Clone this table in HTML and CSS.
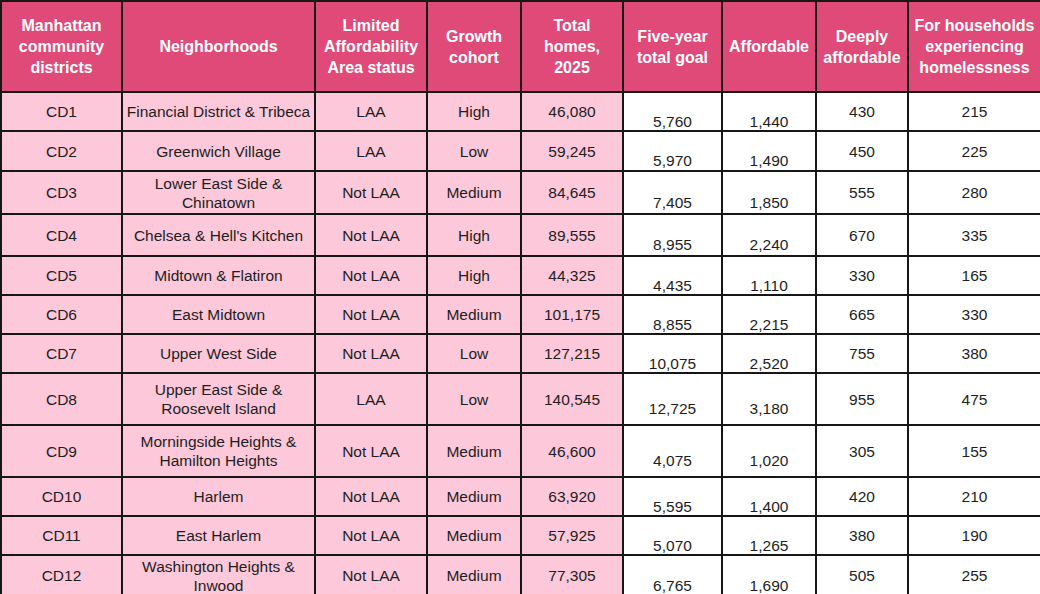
FILE: index.html
```html
<!DOCTYPE html>
<html lang="en">
<head>
<meta charset="utf-8">
<title>Manhattan community districts</title>
<link rel="stylesheet" href="styles.css">
</head>
<body>
<table class="grid">
  <colgroup>
    <col class="c-cd"><col class="c-nb"><col class="c-laa"><col class="c-gc"><col class="c-th">
    <col class="c-five"><col class="c-aff"><col class="c-deep"><col class="c-home">
  </colgroup>
  <thead>
    <tr class="head">
      <th>Manhattan<br>community<br>districts</th>
      <th>Neighborhoods</th>
      <th>Limited<br>Affordability<br>Area status</th>
      <th>Growth<br>cohort</th>
      <th>Total<br>homes,<br>2025</th>
      <th>Five-year<br>total goal</th>
      <th>Affordable</th>
      <th>Deeply<br>affordable</th>
      <th>For households<br>experiencing<br>homelessness</th>
    </tr>
  </thead>
  <tbody>
    <tr class="r39"><td class="pk">CD1</td><td class="pk">Financial District &amp; Tribeca</td><td class="pk">LAA</td><td class="pk">High</td><td class="pk">46,080</td><td class="low">5,760</td><td class="low">1,440</td><td>430</td><td>215</td></tr>
    <tr class="r40"><td class="pk">CD2</td><td class="pk">Greenwich Village</td><td class="pk">LAA</td><td class="pk">Low</td><td class="pk">59,245</td><td class="low">5,970</td><td class="low">1,490</td><td>450</td><td>225</td></tr>
    <tr class="r43"><td class="pk">CD3</td><td class="pk">Lower East Side &amp;<br>Chinatown</td><td class="pk">Not LAA</td><td class="pk">Medium</td><td class="pk">84,645</td><td class="low">7,405</td><td class="low">1,850</td><td>555</td><td>280</td></tr>
    <tr class="r42"><td class="pk">CD4</td><td class="pk">Chelsea &amp; Hell's Kitchen</td><td class="pk">Not LAA</td><td class="pk">High</td><td class="pk">89,555</td><td class="low">8,955</td><td class="low">2,240</td><td>670</td><td>335</td></tr>
    <tr class="r39"><td class="pk">CD5</td><td class="pk">Midtown &amp; Flatiron</td><td class="pk">Not LAA</td><td class="pk">High</td><td class="pk">44,325</td><td class="low">4,435</td><td class="low">1,110</td><td>330</td><td>165</td></tr>
    <tr class="r39"><td class="pk">CD6</td><td class="pk">East Midtown</td><td class="pk">Not LAA</td><td class="pk">Medium</td><td class="pk">101,175</td><td class="low">8,855</td><td class="low">2,215</td><td>665</td><td>330</td></tr>
    <tr class="r39"><td class="pk">CD7</td><td class="pk">Upper West Side</td><td class="pk">Not LAA</td><td class="pk">Low</td><td class="pk">127,215</td><td class="low">10,075</td><td class="low">2,520</td><td>755</td><td>380</td></tr>
    <tr class="r52"><td class="pk">CD8</td><td class="pk">Upper East Side &amp;<br>Roosevelt Island</td><td class="pk">LAA</td><td class="pk">Low</td><td class="pk">140,545</td><td class="low">12,725</td><td class="low">3,180</td><td>955</td><td>475</td></tr>
    <tr class="r52"><td class="pk">CD9</td><td class="pk">Morningside Heights &amp;<br>Hamilton Heights</td><td class="pk">Not LAA</td><td class="pk">Medium</td><td class="pk">46,600</td><td class="low">4,075</td><td class="low">1,020</td><td>305</td><td>155</td></tr>
    <tr class="r39"><td class="pk">CD10</td><td class="pk">Harlem</td><td class="pk">Not LAA</td><td class="pk">Medium</td><td class="pk">63,920</td><td class="low">5,595</td><td class="low">1,400</td><td>420</td><td>210</td></tr>
    <tr class="r39"><td class="pk">CD11</td><td class="pk">East Harlem</td><td class="pk">Not LAA</td><td class="pk">Medium</td><td class="pk">57,925</td><td class="low">5,070</td><td class="low">1,265</td><td>380</td><td>190</td></tr>
    <tr class="r41"><td class="pk">CD12</td><td class="pk">Washington Heights &amp;<br>Inwood</td><td class="pk">Not LAA</td><td class="pk">Medium</td><td class="pk">77,305</td><td class="low">6,765</td><td class="low">1,690</td><td>505</td><td>255</td></tr>
  </tbody>
</table>
</body>
</html>
```

FILE: styles.css
```css
html, body {
  margin: 0;
  padding: 0;
  background: #ffffff;
}

.grid {
  border-collapse: collapse;
  table-layout: fixed;
  width: 1040px;
  font-family: "Liberation Sans", Arial, sans-serif;
  font-size: 15.5px;
  color: #1e1e1e;
}

.c-cd { width: 121px; }
.c-nb { width: 193px; }
.c-laa { width: 112px; }
.c-gc { width: 94px; }
.c-th { width: 102px; }
.c-five { width: 99px; }
.c-aff { width: 94px; }
.c-deep { width: 92px; }
.c-home { width: 133px; }

.grid th,
.grid td {
  border: 2px solid #161616;
  padding: 0 2px;
  text-align: center;
  vertical-align: middle;
  white-space: nowrap;
  line-height: 19px;
  background: #ffffff;
}

.head {
  height: 91px;
}

.grid th {
  background: #e04a79;
  color: #ffffff;
  font-weight: bold;
  font-size: 16px;
  line-height: 21px;
}

.grid td.pk {
  background: #fcc8da;
}

.grid td.low {
  padding-top: 20px;
  line-height: 16px;
}

.r39 { height: 39px; }
.r40 { height: 40px; }
.r41 { height: 41px; }
.r42 { height: 42px; }
.r43 { height: 43px; }
.r52 { height: 52px; }
```
